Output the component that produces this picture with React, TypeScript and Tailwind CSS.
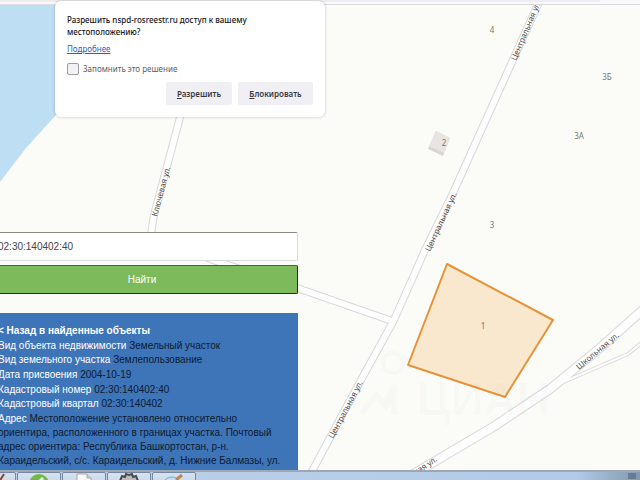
import { useState } from 'react'

const roads = [
  { d: 'M540 0 L512 62 L453 193 L425 250 L394 320 L361 380 L310 475', w: 6 },
  { d: 'M182 110 L154 215 L151 234 L213 260 L300 289 L392 321', w: 6 },
  { d: 'M405 479 L493 427 L550 389 L600 348 L645 308', w: 8 },
  { d: 'M550 388 L568 380 L628 354 L645 340', w: 2 },
]

const streets = [
  { name: 'Центральная ул.', x: 516, y: 61, angle: -67 },
  { name: 'Центральная ул.', x: 430, y: 252, angle: -65 },
  { name: 'Центральная ул.', x: 333, y: 439, angle: -62 },
  { name: 'Ключевая ул.', x: 157, y: 217, angle: -75 },
  { name: 'Школьная ул.', x: 579, y: 370, angle: -40 },
  { name: 'Школьная ул.', x: 394, y: 490, angle: -34 },
]

const houses = [
  { label: '4', x: 492, y: 33 },
  { label: '3Б', x: 607, y: 80 },
  { label: '3А', x: 579, y: 139 },
  { label: '2', x: 444, y: 146 },
  { label: '3', x: 492, y: 228 },
  { label: '1', x: 483, y: 329 },
]

const details = [
  [
    { title: 'Вид объекта недвижимости', value: 'Земельный участок' },
    { title: 'Вид земельного участка', value: 'Землепользование' },
  ],
  [{ title: 'Дата присвоения', value: '2004-10-19' }],
  [
    { title: 'Кадастровый номер', value: '02:30:140402:40' },
    { title: 'Кадастровый квартал', value: '02:30:140402' },
  ],
  [
    {
      title: 'Адрес',
      value:
        'Местоположение установлено относительно ориентира, расположенного в границах участка. Почтовый адрес ориентира: Республика Башкортостан, р-н. Караидельский, с/с. Караидельский, д. Нижние Балмазы, ул.',
    },
  ],
]

function ParcelMap() {
  return (
    <svg
      className="absolute inset-0 h-full w-full font-['Noto_Sans',sans-serif]"
      viewBox="0 5 640 465"
      preserveAspectRatio="xMidYMid slice"
      role="img"
      aria-label="Карта участка"
    >
      <rect x="0" y="0" width="640" height="480" fill="#fbfcf8" />
      <path d="M0 0 H90 L56 115 L26 148 L0 182 Z" fill="#bedef3" />

      {/* roads: casing first, then the white surface */}
      <g fill="none" strokeLinejoin="round">
        {roads.map((r) => (
          <path key={r.d} d={r.d} stroke="#d8d8da" strokeWidth={r.w + 2} />
        ))}
        {roads.map((r) => (
          <path key={r.d} d={r.d} stroke="#fefefe" strokeWidth={r.w} />
        ))}
      </g>

      {/* building */}
      <path d="M436 131 L450 138 L443 156 L428 149 Z" fill="#d9d6d3" />
      <path d="M436 131 L450 138 L444 153 L429 146 Z" fill="#e8e5e2" />

      {/* parcel */}
      <path
        d="M447 264 L553 320 L505 397 L408 365 Z"
        fill="#f9e8cd"
        stroke="#e69338"
        strokeWidth="2"
        strokeLinejoin="round"
      />

      {/* watermark */}
      <g fill="none" stroke="#8a8a8a" strokeOpacity="0.03">
        <circle cx="393" cy="363" r="10" strokeWidth="4" />
        <path d="M362 413 L376 395 L386 406 L394 385 V415" strokeWidth="6" />
      </g>
      <text
        x="417"
        y="415"
        fontSize="46"
        fontWeight="700"
        fill="#8a8a8a"
        fillOpacity="0.03"
        className="font-['Liberation_Sans',sans-serif]"
      >
        ЦИАН
      </text>

      <g fontSize="8" fill="#4c4c4c">
        {streets.map((s) => (
          <text key={s.x} transform={`translate(${s.x} ${s.y}) rotate(${s.angle})`}>
            {s.name}
          </text>
        ))}
      </g>
      <g fontSize="8" fill="#777777" textAnchor="middle">
        {houses.map((h) => (
          <text key={h.label} x={h.x} y={h.y}>
            {h.label}
          </text>
        ))}
      </g>
    </svg>
  )
}

function LocationPrompt() {
  const [remember, setRemember] = useState(false)

  return (
    <div
      role="dialog"
      aria-labelledby="prompt-title"
      className="absolute left-[55px] top-px z-10 w-[270px] rounded-md bg-white px-3 pb-3 pt-[13px] font-['Noto_Sans',sans-serif] text-[8px] leading-3 text-[#3c3c46] shadow-[0_0_3px_rgba(0,0,0,0.25)]"
    >
      <h2 id="prompt-title" className="font-medium text-[#15141a]">
        Разрешить nspd-rosreestr.ru доступ к вашему
        <br />
        местоположению?
      </h2>
      <a href="#more" className="mt-[5px] block w-fit text-[#2a62b8] underline">
        Подробнее
      </a>
      <label className="mt-2 flex items-center gap-1 text-[#5b5b66]">
        <input
          type="checkbox"
          checked={remember}
          onChange={(e) => setRemember(e.target.checked)}
          className="h-3 w-3 appearance-none rounded-xs border border-[#9c9ca4] bg-[#f2f2f4] checked:bg-[#2a62b8]"
        />
        Запомнить это решение
      </label>
      <div className="mt-[7px] flex justify-end gap-[6px] font-semibold text-[#3a3943]">
        <button type="button" className="h-[23px] w-[66px] rounded-xs bg-[#f0f0f4]">
          <u>Р</u>азрешить
        </button>
        <button type="button" className="h-[23px] w-[75px] rounded-xs bg-[#f0f0f4]">
          <u>Б</u>локировать
        </button>
      </div>
    </div>
  )
}

function SearchPanel() {
  const [query, setQuery] = useState('02:30:140402:40')

  return (
    <aside className="relative -ml-1 w-[302px] shrink-0 pt-[227px] font-['Liberation_Sans',sans-serif]">
      <form onSubmit={(e) => e.preventDefault()}>
        <input
          type="text"
          aria-label="Кадастровый номер"
          value={query}
          onChange={(e) => setQuery(e.target.value)}
          className="block h-[29px] w-full rounded-xs border border-[#dcdcdc] border-t-[#8a8a82] bg-white px-px text-[10px] text-[#444444]"
        />
        <button
          type="submit"
          className="mt-1 block h-[29px] w-full rounded-xs border border-[#3f6a2a] border-b-[#1d3313] border-r-[#1d3313] bg-[#7dba5b] pr-[10px] text-[10px] text-white"
        >
          Найти
        </button>
      </form>

      <section className="mt-[19px] space-y-px bg-[#3e74b8] pb-4 pl-[2px] pr-2 pt-[11px] text-[10px] leading-[14px]">
        <a href="#results" className="block font-bold text-white">
          &lt; Назад в найденные объекты
        </a>
        {details.map((group) => (
          <div key={group[0].title}>
            {group.map((row) => (
              <p key={row.title} className="text-[#0c1c33]">
                <span className="text-white">{row.title}</span> {row.value}
              </p>
            ))}
          </div>
        ))}
      </section>
    </aside>
  )
}

function Taskbar() {
  const item =
    'flex h-6 w-[44px] justify-center rounded-t-xs border border-[#7488a0] bg-linear-to-b from-[#d6e2ef] to-[#b9cde3]'

  return (
    <footer className="flex h-[10px] shrink-0 items-start gap-px overflow-hidden border-t-2 border-[#9ca8b6] bg-linear-to-r from-[#bccfe6] via-[#b3cbe8] via-90% to-[#8398ae]">
      <button type="button" aria-label="Редактор" className={`${item} -ml-7`}>
        <svg className="ml-6 h-4 w-4" viewBox="0 0 16 16">
          <path d="M1 9 L6 1" stroke="#8a4434" strokeWidth="2" />
        </svg>
      </button>
      <button type="button" aria-label="Браузер" className={item}>
        <svg className="mt-px h-5 w-5" viewBox="0 0 20 20">
          <circle cx="10" cy="10" r="10" fill="#74b84a" />
          <path d="M9 9 L14 4" stroke="#eef7e8" strokeWidth="3" />
        </svg>
      </button>
      <button type="button" aria-label="Документ" className={item}>
        <svg className="h-5 w-4" viewBox="0 0 16 20">
          <path d="M1 1 H11 L15 5 V20 H1 Z" fill="#fafafa" stroke="#a5a5a8" />
          <path d="M11 1 V5 H15" fill="#d5d5d5" stroke="#a5a5a8" />
        </svg>
      </button>
      <button type="button" aria-label="Игра" className={item}>
        <svg className="h-5 w-5" viewBox="0 0 20 20">
          <path
            d="M1 8 L3 3 L6 4 L7 1 L10 2 L13 1 L14 4 L17 3 L19 8 L16 16 H4 Z"
            fill="#bdbdbd"
            stroke="#4a4a50"
            strokeWidth="2"
          />
        </svg>
      </button>
      <button type="button" aria-label="Рисунок" className={item}>
        <svg className="h-5 w-6" viewBox="0 0 24 20">
          <ellipse cx="10" cy="10" rx="8" ry="6" fill="#c3dcf0" stroke="#83aacb" />
          <path d="M14 7 L20 2" stroke="#bb875b" strokeWidth="3" />
        </svg>
      </button>
      <svg className="ml-auto mr-1 mt-px h-[6px] w-2" viewBox="0 0 8 6">
        <path d="M0 1 H8 M0 3 H8 M0 5 H8" stroke="#4b5b6d" />
      </svg>
    </footer>
  )
}

export default function App() {
  return (
    <div className="relative flex h-screen flex-col overflow-hidden bg-[#fbfcf8]">
      <header className="h-[5px] shrink-0 border-b border-[#dcdce0] bg-[#f9f9fb]">
        <div className="mr-10 h-[2px] bg-[#ededf1]" />
      </header>
      <main className="relative flex min-h-0 flex-1 overflow-hidden">
        <ParcelMap />
        <SearchPanel />
      </main>
      <LocationPrompt />
      <Taskbar />
    </div>
  )
}
